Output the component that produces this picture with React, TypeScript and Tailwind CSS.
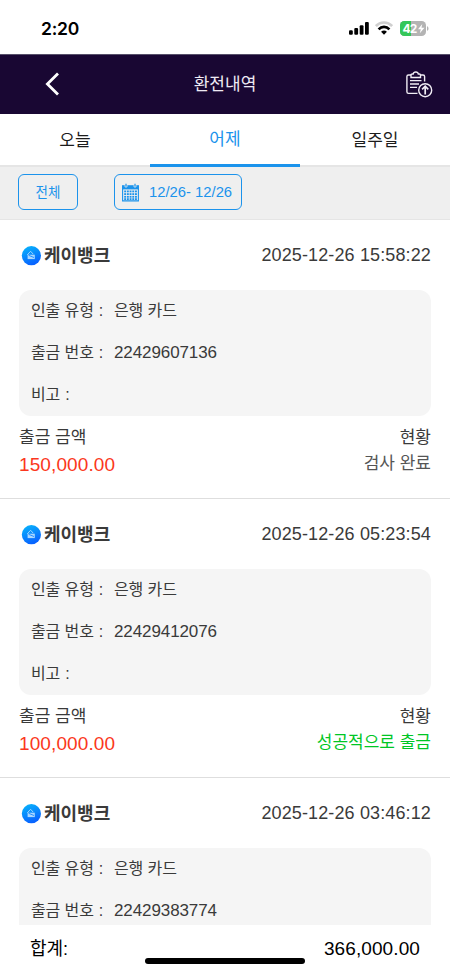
type Item = { time: string; no: string; amount?: string; status?: string; done?: boolean };

const ITEMS: Item[] = [
  { time: '2025-12-26 15:58:22', no: '22429607136', amount: '150,000.00', status: '검사 완료' },
  { time: '2025-12-26 05:23:54', no: '22429412076', amount: '100,000.00', status: '성공적으로 출금', done: true },
  { time: '2025-12-26 03:46:12', no: '22429383774' },
];

function StatusBar() {
  return (
    <div className="flex h-[54px] shrink-0 items-start justify-between pl-[41px] pr-[20px] pt-[18px]">
      <span className="font-['Inter',sans-serif] text-[17.5px] font-semibold leading-[22px] tracking-[-0.25px] text-black">2:20</span>
      <div className="flex pt-[3px]">
        <svg width="20" height="14" viewBox="0 0 20 14">
          <rect x="0" y="9.3" width="3.8" height="4.5" rx="1.1" />
          <rect x="5.3" y="7" width="3.8" height="6.8" rx="1.1" />
          <rect x="10.7" y="4.2" width="3.8" height="9.6" rx="1.1" />
          <rect x="16" y="1" width="3.8" height="12.8" rx="1.1" />
        </svg>
        <svg width="18" height="14" viewBox="0 0 18 14" className="ml-[6px]" fill="none" strokeWidth="2.6">
          <path d="M.9 5C5.3.4 12.7.4 17.1 5" stroke="#cfcfcf" />
          <path d="M3.6 8.3C6.6 5.1 11.4 5.1 14.4 8.3" stroke="#000" />
          <path d="M9 13.7L6.1 10.8C7.8 9.2 10.2 9.2 11.9 10.8Z" fill="#000" />
        </svg>
        <svg width="30" height="15" viewBox="0 0 30 15" className="ml-[7px]">
          <defs>
            <clipPath id="battery">
              <rect x="0" y="0" width="26" height="15" rx="4.3" />
            </clipPath>
          </defs>
          <g clipPath="url(#battery)">
            <rect width="27" height="15" fill="#b4b4b4" />
            <rect width="11" height="15" fill="#35c759" />
          </g>
          <path d="M27 5.2C29 5.8 29 9.2 27 9.8Z" fill="#b4b4b4" />
          <text x="2.4" y="11.9" fontSize="12" fontWeight="700" fill="#fff" className="font-['Inter',sans-serif]" textLength="15">42</text>
          <path d="M22.3 3L18 8.2H20.8L19.8 12.3L24.5 6.8H21.5Z" fill="#fff" />
        </svg>
      </div>
    </div>
  );
}

function Header() {
  return (
    <header className="grid h-[60px] shrink-0 grid-cols-[120px_1fr_120px] items-center border-t border-[#57506a] bg-[#190733]">
      <svg width="15" height="24" viewBox="0 0 15 24" className="-mt-[2px] ml-[44.5px]" fill="none" stroke="#fff" strokeWidth="2.8">
        <path d="M13 1.5L2.4 12L13 22.5" />
      </svg>
      <h1 className="text-center text-[17px] leading-6 text-[#eeeaf3]">환전내역</h1>
      <svg width="28" height="28" viewBox="0 0 28 28" className="ml-[75px]" fill="none" stroke="#f0edf4" strokeWidth="1.4">
        <path d="M6 4H3.5Q1.9 4 1.9 5.6V20.8Q1.9 22.4 3.5 22.4H12.5" />
        <path d="M15.5 4H18Q19.6 4 19.6 5.6V10.5" />
        <path d="M6 6.5V4.1Q6 3 7.2 3H8.2Q8.5 1 10.8 1Q13 1 13.3 3H14.3Q15.5 3 15.5 4.1V6.5Z" />
        <path d="M5 9.6H16.5M5 13H14M5 16.4H12" />
        <circle cx="20.2" cy="19.2" r="6.5" />
        <path d="M20.2 23.4V15.6M17.1 18.3L20.2 15.2L23.3 18.3" strokeWidth="1.7" />
      </svg>
    </header>
  );
}

function Tabs() {
  return (
    <nav className="grid h-[53px] shrink-0 grid-cols-3 text-center text-[17px] leading-[53px] text-[#1c1c1c]">
      <div className="h-[53px] border-b-2 border-[#e5e5e5]">오늘</div>
      <div className="h-[53px] border-b-[2.6px] border-[#1b93ec] leading-[52px] text-[#1b93ec] shadow-[inset_0_-1px_0_#1b93ec]">어제</div>
      <div className="h-[53px] border-b-2 border-[#e5e5e5]">일주일</div>
    </nav>
  );
}

function Filters() {
  return (
    <div className="flex h-[53px] shrink-0 items-start gap-[36px] border-b border-[#e5e5e5] bg-[#efefef] pl-[18px] pt-[7px] text-[#1b93ec]">
      <button className="h-[36px] w-[60px] rounded-[6px] border border-[#1b93ec] text-[13.5px] leading-[36px]">전체</button>
      <button className="flex h-[36px] w-[128px] items-center rounded-[6px] border border-[#1b93ec] pl-[7px]">
        <svg width="17" height="19" viewBox="0 0 17 19" fill="#1b93ec">
          <path d="M0 2.2H17V6.4H0Z" />
          <path d="M3 .6H5V4H3ZM12 .6H14V4H12Z" stroke="#efefef" strokeWidth=".7" />
          <path d="M.6 6V17.9H16.4V6" fill="none" stroke="#1b93ec" strokeWidth="1.1" />
          {[7.5, 10.2, 12.9, 15.2].map((y) =>
            [2.2, 4.9, 7.6, 10.3, 13].map((x) => <rect key={`${x}-${y}`} x={x} y={y} width="1.9" height="1.8" />),
          )}
        </svg>
        <span className="ml-[10px] whitespace-pre text-[14.8px] leading-[34px]">12/26- 12/26</span>
      </button>
    </div>
  );
}

function BankLogo() {
  return (
    <svg width="20" height="20" viewBox="0 0 20 20">
      <defs>
        <linearGradient id="bank" x1="0" y1="0" x2="0.4" y2="1">
          <stop offset="0" stopColor="#08b9fb" />
          <stop offset="1" stopColor="#0864ff" />
        </linearGradient>
      </defs>
      <circle cx="10.4" cy="9.7" r="9.6" fill="url(#bank)" />
      <path d="M6.2 8.9L9.6 5.3L12.2 8.1" fill="none" stroke="#a9dcff" strokeWidth=".9" />
      <path d="M6.6 8.7H13.8V13.1H6.6Z" fill="#a9d7ff" />
      <path d="M7.6 9.3L13 11.5" stroke="#1786ff" strokeWidth=".9" />
    </svg>
  );
}

function Row({ label, value }: { label: string; value?: string }) {
  return (
    <div className="flex h-[42px] items-center text-[16px] tracking-[-0.1px]">
      <span className="w-[83px] whitespace-pre">
        {label}
        <span className="ml-[5px]">:</span>
      </span>
      {value && <span className={/^\d/.test(value) ? 'text-[17px]' : ''}>{value}</span>}
    </div>
  );
}

function Card({ item }: { item: Item }) {
  return (
    <article className="h-[279px] shrink-0 border-b border-[#dedede] px-[19px] text-[#3a3a3a]">
      <div className="flex h-[70px] items-center justify-between">
        <div className="flex items-center pl-[2px] pt-px">
          <BankLogo />
          <strong className="ml-[3px] text-[18px] font-bold leading-6">케이뱅크</strong>
        </div>
        <time className="text-[18px] leading-6 tracking-[0.13px]">{item.time}</time>
      </div>
      <div className="h-[126px] rounded-[12px] bg-[#f5f5f5] pl-[12px]">
        <Row label="인출 유형" value="은행 카드" />
        <Row label="출금 번호" value={item.no} />
        {item.amount && <Row label="비고" />}
      </div>
      {item.amount && (
        <div className="flex justify-between pt-[8px] text-[17px] leading-[27px]">
          <div>
            <div>출금 금액</div>
            <div className="text-[19px] tracking-[0.1px] text-[#fb3720]">{item.amount}</div>
          </div>
          <div className="text-right">
            <div>현황</div>
            <div className={item.done ? 'leading-[26px] text-[#00c625]' : 'leading-[26px] text-[#555555]'}>{item.status}</div>
          </div>
        </div>
      )}
    </article>
  );
}

export default function App() {
  return (
    <div className="flex h-[973px] w-[450px] flex-col overflow-hidden bg-white font-['Liberation_Sans','Noto_Sans_CJK_KR',sans-serif]">
      <StatusBar />
      <Header />
      <Tabs />
      <Filters />
      <main className="flex min-h-0 flex-1 flex-col overflow-hidden">
        {ITEMS.map((item) => (
          <Card key={item.no} item={item} />
        ))}
      </main>
      <footer className="grid h-[48px] shrink-0 grid-cols-[1fr_160px_1fr] bg-white px-[30px] text-black">
        <span className="text-[18px] leading-[48px]">합계:</span>
        <span className="mb-[9px] h-[6px] w-[160px] self-end rounded-full bg-black" />
        <span className="justify-self-end text-[19px] leading-[48px] tracking-[0.1px]">366,000.00</span>
      </footer>
    </div>
  );
}
